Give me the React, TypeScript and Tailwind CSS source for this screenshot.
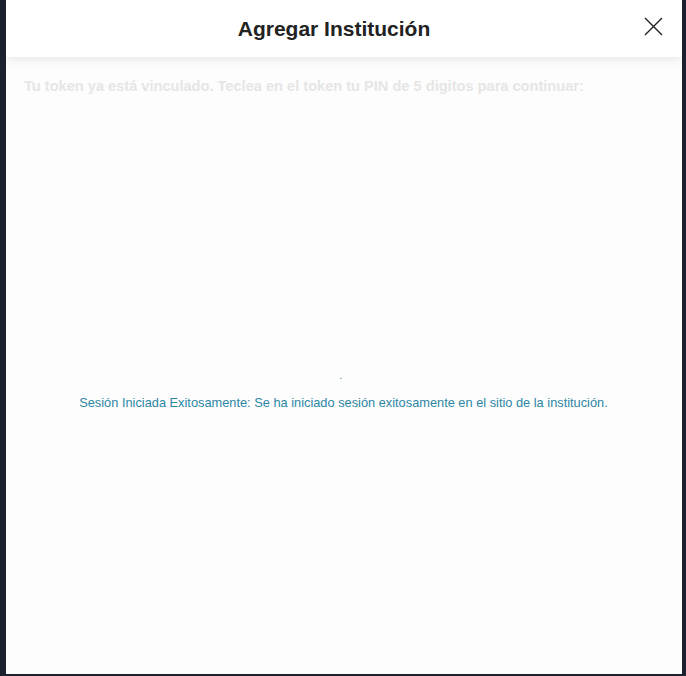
export default function App() {
  return (
    <div className="w-[686px] h-[676px] bg-[#1c2130] flex pl-[6px] pr-[4px] pb-[2px] font-['Liberation_Sans',Arial,sans-serif]">
      <div className="flex-1 flex flex-col bg-[#fdfdfd]">
        <header className="h-[57px] bg-white shadow-[0_3px_8px_rgba(0,0,0,0.08)] flex items-center relative z-10">
          <h1 className="flex-1 text-center text-[21px] font-bold text-[#222] pr-[20px] pt-[1px]">
            Agregar Institución
          </h1>
          <button className="absolute right-[19px] top-[17px] w-[19px] h-[19px] text-[#222]">
            <svg viewBox="0 0 19 19" className="w-[19px] h-[19px]" fill="none" stroke="currentColor" strokeWidth="1.4">
              <path d="M1 1 L18 18 M18 1 L1 18" />
            </svg>
          </button>
        </header>
        <main className="flex-1 flex flex-col">
          <p className="px-[18px] pt-[19px] text-[14.6px] font-bold text-[#e6e6e6]">
            Tu token ya está vinculado. Teclea en el token tu PIN de 5 digitos para continuar:
          </p>
          <div className="mt-[273px] flex flex-col items-center">
            <span className="text-[10px] leading-[10px] text-[#2c86a6] ml-[-6px]">.</span>
            <p className="mt-[12px] text-[12.8px] text-[#2c86a6] ml-[-1px]">
              Sesión Iniciada Exitosamente: Se ha iniciado sesión exitosamente en el sitio de la institución.
            </p>
          </div>
        </main>
      </div>
    </div>
  );
}
